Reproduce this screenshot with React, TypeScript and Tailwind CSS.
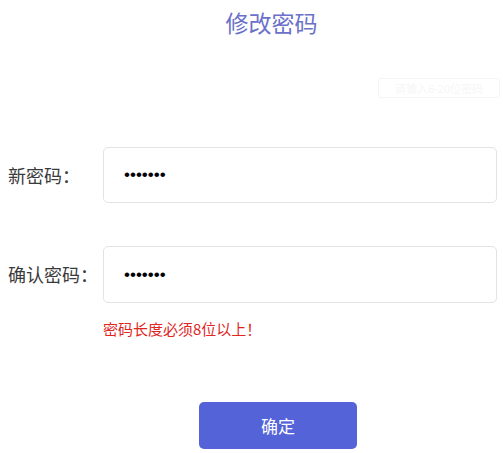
export default function App() {
  return (
    <main
      className="relative h-[453px] w-[503px] overflow-hidden bg-white text-[#3a3a3a]"
      style={{ fontFamily: '"Noto Sans CJK SC", "Noto Sans", sans-serif' }}
    >
      <h1 className="pl-[40px] pt-[6px] text-center text-[23px] leading-[32px] text-[#6b71c9]">修改密码</h1>

      <div className="absolute left-[378px] top-[78px] h-[20px] w-[122px] rounded-[2px] border border-[#f5f5f5] text-center text-[11px] leading-[18px] text-[#f6f6f6]">
        请输入6-20位密码
      </div>

      <div className="mt-[109px] flex items-center">
        <label className="w-[103px] pl-[8px] text-[18px]">新密码：</label>
        <input
          type="password"
          defaultValue="1234567"
          className="h-[56px] w-[394px] rounded-[5px] border border-[#e3e3e3] px-[20px] font-['Liberation_Sans',sans-serif] text-[17px] text-black outline-none"
        />
      </div>

      <div className="mt-[43px] flex items-center">
        <label className="w-[103px] pl-[8px] text-[18px]">确认密码：</label>
        <input
          type="password"
          defaultValue="1234567"
          className="h-[57px] w-[394px] rounded-[5px] border border-[#e3e3e3] px-[20px] font-['Liberation_Sans',sans-serif] text-[17px] text-black outline-none"
        />
      </div>

      <p className="ml-[103px] mt-[16px] text-[15px] leading-[20px] text-[#e0261f]">密码长度必须8位以上！</p>

      <div className="mt-[63px] flex pl-[199px]">
        <button className="h-[47px] w-[158px] rounded-[5px] bg-[#5464d8] text-[17px] text-white">确定</button>
      </div>
    </main>
  );
}
